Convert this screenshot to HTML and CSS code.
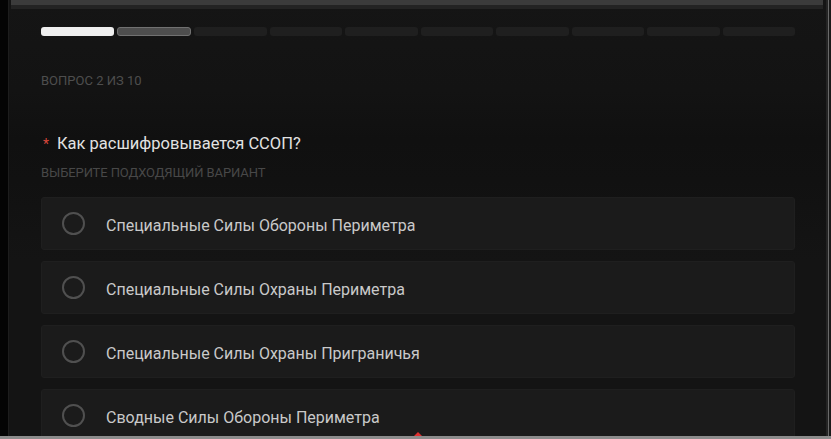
FILE: index.html
```html
<!DOCTYPE html>
<html lang="ru">
<head>
<meta charset="utf-8">
<title>Вопрос 2 из 10</title>
<link rel="stylesheet" href="styles.css">
</head>
<body>
<div class="screen">
  <div class="gutter"></div>
  <div class="frame">
    <div class="topbar"></div>
    <div class="content">
      <div class="progress">
        <span class="seg done"></span>
        <span class="seg current"></span>
        <span class="seg"></span>
        <span class="seg"></span>
        <span class="seg"></span>
        <span class="seg"></span>
        <span class="seg"></span>
        <span class="seg"></span>
        <span class="seg"></span>
        <span class="seg"></span>
      </div>
      <div class="counter">ВОПРОС 2 ИЗ 10</div>
      <div class="question"><span class="star">*</span>Как расшифровывается ССОП?</div>
      <div class="hint">ВЫБЕРИТЕ ПОДХОДЯЩИЙ ВАРИАНТ</div>
      <div class="options">
        <label class="option"><span class="radio"></span><span class="opt-text">Специальные Силы Обороны Периметра</span></label>
        <label class="option"><span class="radio"></span><span class="opt-text">Специальные Силы Охраны Периметра</span></label>
        <label class="option"><span class="radio"></span><span class="opt-text">Специальные Силы Охраны Приграничья</span></label>
        <label class="option"><span class="radio"></span><span class="opt-text">Сводные Силы Обороны Периметра</span></label>
      </div>
    </div>
    <span class="marker"></span>
  </div>
  <div class="edge"></div>
</div>
<div class="bottomline"></div>
</body>
</html>
```
FILE: styles.css
```css
html, body {
  margin: 0;
  padding: 0;
}
body {
  width: 831px;
  height: 439px;
  overflow: hidden;
  background: #050505;
  font-family: Roboto, "Noto Sans", "DejaVu Sans", sans-serif;
}
.screen {
  display: flex;
  height: 436px;
  overflow: hidden;
}
.gutter {
  width: 8px;
  flex: none;
  background: #040404;
  border-right: 1px solid #1d1d1d;
}
.frame {
  position: relative;
  flex: 1;
  background: linear-gradient(180deg, #151515 0px, #131313 90px, #101010 140px, #111111 180px, #141414 260px, #141414 100%);
  border-right: 2px solid #242424;
}
.edge {
  width: 3px;
  flex: none;
  background: linear-gradient(90deg, #6a6a6a 0 1px, #1a1a1a 1px);
}
.topbar {
  height: 5px;
  margin: 0 3px 0 2px;
  background: #3b3b3b;
  border-bottom: 4px solid #232323;
}
.content {
  padding: 18px 31px 0 32px;
}
.progress {
  display: flex;
  gap: 3px;
  height: 9px;
}
.seg {
  flex: 1;
  border-radius: 3px;
  background: #1f1f1f;
  box-sizing: border-box;
}
.seg.done {
  background: #efefef;
}
.seg.current {
  background: #4e4e4e;
  border: 1px solid #717171;
}
.counter {
  margin-top: 37px;
  font-size: 13px;
  line-height: 15px;
  color: #4e4e4e;
}
.question {
  margin-top: 45px;
  font-size: 16.5px;
  line-height: 22px;
  color: #e2e2e2;
  display: flex;
  align-items: baseline;
}
.star {
  color: #d8473c;
  font-size: 14px;
  width: 14px;
  margin-left: 2px;
}
.hint {
  margin-top: 10px;
  font-size: 13px;
  line-height: 15px;
  color: #484848;
  letter-spacing: -0.1px;
}
.options {
  margin-top: 17px;
  display: flex;
  flex-direction: column;
  gap: 11px;
}
.option {
  height: 53px;
  box-sizing: border-box;
  display: flex;
  align-items: center;
  padding-left: 20px;
  background: #1b1b1b;
  border: 1px solid #1f1f1f;
  border-radius: 3px;
}
.radio {
  width: 23px;
  height: 23px;
  box-sizing: border-box;
  border: 2px solid #505050;
  border-radius: 50%;
  flex: none;
}
.opt-text {
  margin-left: 21px;
  padding-top: 3px;
  font-size: 16px;
  color: #c9c9c9;
}
.marker {
  position: absolute;
  left: 405px;
  bottom: 0;
  width: 0;
  height: 0;
  border-left: 4px solid transparent;
  border-right: 4px solid transparent;
  border-bottom: 4px solid #e03030;
}
.bottomline {
  height: 3px;
  background: #8c8c8c;
}
```
